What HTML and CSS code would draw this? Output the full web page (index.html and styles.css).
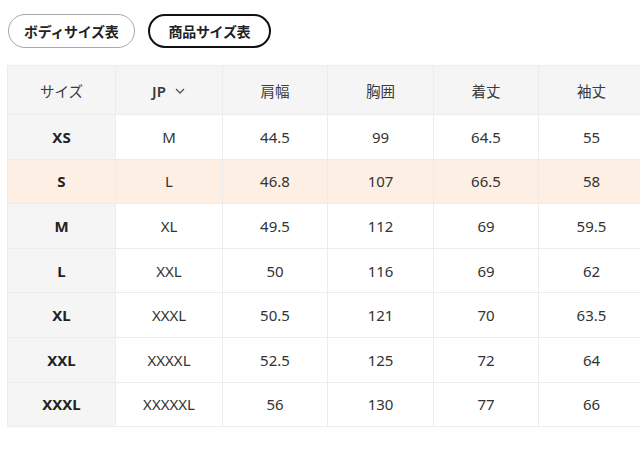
FILE: index.html
```html
<!DOCTYPE html>
<html lang="ja">
<head>
<meta charset="utf-8">
<link rel="stylesheet" href="styles.css">
</head>
<body>
<div class="page">
  <div class="tabs">
    <button class="tab">ボディサイズ表</button>
    <button class="tab active">商品サイズ表</button>
  </div>
  <div class="table-wrap">
    <table class="size-table">
      <colgroup>
        <col class="c1"><col class="c2"><col class="c3"><col class="c4"><col class="c3"><col class="c4">
      </colgroup>
      <thead>
        <tr>
          <th>サイズ</th>
          <th><span class="jp">JP <svg class="chev" width="12" height="8" viewBox="0 0 12 8"><path d="M2 2 L6 6 L10 2" fill="none" stroke="#555" stroke-width="1.3"/></svg></span></th>
          <th>肩幅</th>
          <th>胸囲</th>
          <th>着丈</th>
          <th>袖丈</th>
        </tr>
      </thead>
      <tbody>
        <tr><th>XS</th><td>M</td><td>44.5</td><td>99</td><td>64.5</td><td>55</td></tr>
        <tr class="hl"><th>S</th><td>L</td><td>46.8</td><td>107</td><td>66.5</td><td>58</td></tr>
        <tr><th>M</th><td>XL</td><td>49.5</td><td>112</td><td>69</td><td>59.5</td></tr>
        <tr><th>L</th><td>XXL</td><td>50</td><td>116</td><td>69</td><td>62</td></tr>
        <tr><th>XL</th><td>XXXL</td><td>50.5</td><td>121</td><td>70</td><td>63.5</td></tr>
        <tr><th>XXL</th><td>XXXXL</td><td>52.5</td><td>125</td><td>72</td><td>64</td></tr>
        <tr><th>XXXL</th><td>XXXXXL</td><td>56</td><td>130</td><td>77</td><td>66</td></tr>
      </tbody>
    </table>
  </div>
</div>
</body>
</html>
```

FILE: styles.css
```css
html, body {
  margin: 0;
  padding: 0;
  background: #fff;
}
body {
  font-family: "Noto Sans", "Noto Sans CJK JP", sans-serif;
  color: #333;
  width: 640px;
  height: 464px;
  overflow: hidden;
}
.page {
  padding: 14px 0 0 7px;
}
.tabs {
  display: flex;
  gap: 13px;
  margin-left: 1px;
}
.tab {
  height: 34px;
  padding: 0 15px;
  border-radius: 17px;
  border: 1px solid #a8a8a8;
  background: #fff;
  font-family: "Noto Sans CJK JP", sans-serif;
  font-size: 14px;
  font-weight: 600;
  color: #222;
  letter-spacing: -0.3px;
  line-height: 1;
}
.tab.active {
  border: 2px solid #111;
  padding: 0 19px;
}
.table-wrap {
  margin-top: 17px;
  width: 700px;
}
.size-table {
  border-collapse: collapse;
  table-layout: fixed;
  width: 637px;
  border: 1px solid #e6e6e6;
}
.c1 { width: 108px; }
.c2 { width: 107px; }
.c3 { width: 105px; }
.c4 { width: 106px; }
.size-table th,
.size-table td {
  border: 1px solid #ececec;
  text-align: center;
  vertical-align: middle;
  font-size: 15px;
  padding: 0;
  height: 43.6px;
}
.size-table thead th {
  background: #f5f5f5;
  font-weight: 400;
  height: 48px;
  font-family: "Noto Sans CJK JP", sans-serif;
  font-size: 14.5px;
  color: #3a3a3a;
}
.size-table thead th .jp {
  font-family: "Noto Sans", sans-serif;
  font-size: 15px;
  font-weight: 600;
  display: inline-flex;
  align-items: center;
  gap: 8px;
}
.size-table tbody th {
  background: #f5f5f5;
  font-weight: 700;
  color: #222;
}
.size-table tbody td {
  background: #fff;
}
.size-table tr.hl th,
.size-table tr.hl td {
  background: #fdefe3;
}
```
